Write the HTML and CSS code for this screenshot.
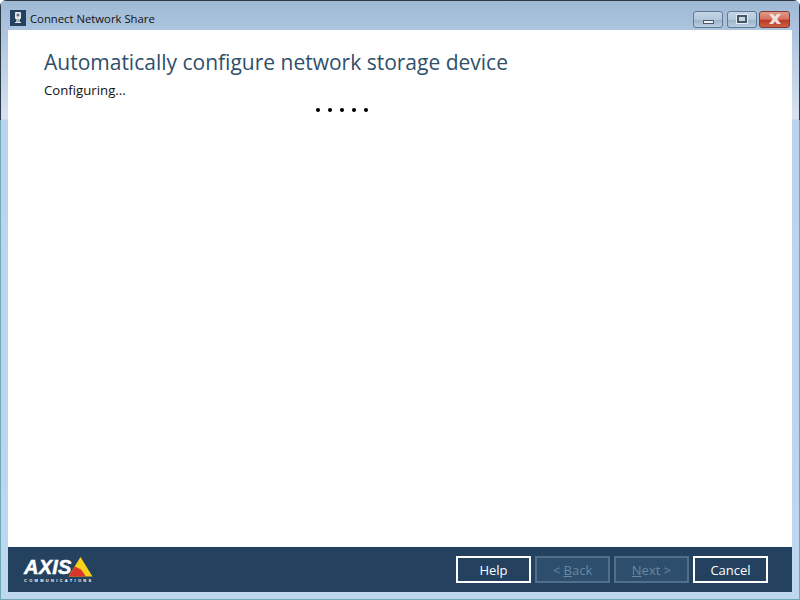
FILE: index.html
```html
<!DOCTYPE html>
<html lang="en">
<head>
    <meta charset="UTF-8">
    <title>Connect Network Share</title>
    <link rel="stylesheet" href="styles.css">
</head>
<body>
    <div class="window">
        <div class="titlebar">
            <div class="app-icon">
                <svg width="16" height="16" viewBox="0 0 16 16">
                    <rect width="16" height="16" fill="#24425f"/>
                    <rect x="5" y="2" width="6" height="7" rx="1" fill="#e4e8ea"/>
                    <circle cx="8" cy="5" r="1.500" fill="#5c7286"/>
                    <rect x="6" y="9" width="4" height="3" fill="#a9b4bd"/>
                    <rect x="5" y="12" width="6" height="1" fill="#e4e8ea"/>
                </svg>
            </div>
            <span class="window-title">Connect Network Share</span>
            <div class="window-controls">
                <div class="ctl"><span class="ctl-min"></span></div>
                <div class="ctl"><span class="ctl-max"></span></div>
                <div class="ctl ctl-close">
                    <svg width="14" height="10" viewBox="0 0 14 10">
                        <path d="M1 0h4l2 2.500 2-2.500h4l-3.800 5 3.800 5h-4l-2-2.500-2 2.500h-4l3.800-5z" fill="#f0dfdb"/>
                    </svg>
                </div>
            </div>
        </div>

        <div class="content">
            <h1>Automatically configure network storage device</h1>
            <p class="status">Configuring...</p>
            <div class="dots">
                <span></span><span></span><span></span><span></span><span></span>
            </div>
        </div>

        <div class="footer">
            <div class="logo">
                <div class="logo-top">
                    <span class="logo-axis">AXIS</span>
                    <svg width="25" height="20" viewBox="0 0 25 20">
                        <path d="M12.500 0L24.500 19.500H0.500z" fill="#f6d21a"/>
                        <path d="M0.500 19.500L7 9.500l6 3 5 7z" fill="#d8352c"/>
                    </svg>
                </div>
                <div class="logo-sub">COMMUNICATIONS</div>
            </div>
            <div class="buttons">
                <button class="btn">Help</button>
                <button class="btn" disabled>&lt; <u>B</u>ack</button>
                <button class="btn" disabled><u>N</u>ext &gt;</button>
                <button class="btn">Cancel</button>
            </div>
        </div>
    </div>
</body>
</html>
```

FILE: styles.css
```css
html, body {
    margin: 0;
    height: 100%;
    overflow: hidden;
}
body {
    font-family: "Open Sans", "Noto Sans", sans-serif;
    color: #111;
}
.window {
    box-sizing: border-box;
    width: 800px;
    height: 600px;
    display: flex;
    flex-direction: column;
    padding: 0 8px 8px;
    border-radius: 6px 6px 0 0;
    background:
        linear-gradient(#2c3a46, #2c3a46) top left / 100% 1px no-repeat,
        linear-gradient(#2c3a46 0, #2c3a46 120px, #6fa9b8 120px) top left / 1px 100% no-repeat,
        linear-gradient(#2c3a46 0, #2c3a46 120px, #6fa9b8 120px) top right / 1px 100% no-repeat,
        linear-gradient(#6fa9b8, #6fa9b8) bottom left / 100% 1px no-repeat,
        linear-gradient(#9fb9d5 0, #acc4de 30px, #d6e2f0 119px, #bcd3ee 120px, #bfd6f0 100%);
}
.titlebar {
    height: 30px;
    display: flex;
    align-items: center;
    flex-shrink: 0;
}
.app-icon {
    width: 16px;
    height: 16px;
    margin: 6px 4px 0 2px;
}
.app-icon svg {
    display: block;
}
.window-title {
    font-size: 11.300px;
    margin-top: 7px;
    color: #111;
}
.window-controls {
    margin-left: auto;
    margin-right: 2px;
    margin-top: 8px;
    display: flex;
}
.ctl {
    box-sizing: border-box;
    width: 30px;
    height: 17px;
    margin-left: 4px;
    border: 1px solid #5f7a93;
    border-radius: 3px;
    background: linear-gradient(#c4d5e6 0, #b3c8dc 50%, #9db5cc 55%, #b9cde0 100%);
    display: flex;
    align-items: center;
    justify-content: center;
}
.ctl-min {
    box-sizing: border-box;
    width: 11px;
    height: 4px;
    margin-top: 5px;
    background: #eef3f7;
    border: 1px solid #47586a;
}
.ctl-max {
    width: 6px;
    height: 4px;
    border: 2px solid #47586a;
    background: #c8d7e5;
    outline: 1px solid #e6edf3;
}
.ctl-close {
    width: 31px;
    margin-left: 2px;
    border-color: #7c3b33;
    background: linear-gradient(#e29b8a 0, #d5705c 48%, #bc3a25 55%, #cb5f48 100%);
}
.ctl-close svg {
    display: block;
}
.content {
    flex: 1;
    background: #fff;
    padding: 18px 36px 0;
    min-height: 0;
}
h1 {
    margin: 0;
    font-size: 21px;
    line-height: 28px;
    font-weight: 400;
    color: #2f4f6b;
}
.status {
    margin: 5px 0 0;
    font-size: 13.200px;
    line-height: 18px;
}
.dots {
    display: flex;
    gap: 8px;
    margin: 9px 0 0 272px;
}
.dots span {
    width: 4px;
    height: 4px;
    border-radius: 50%;
    background: #000;
}
.footer {
    height: 45px;
    flex-shrink: 0;
    background: #24425f;
    display: flex;
    align-items: center;
    justify-content: space-between;
    padding: 0 24px 0 16px;
}
.logo {
    color: #fff;
    width: 70px;
    margin-top: 1px;
}
.logo-top {
    display: flex;
    align-items: flex-end;
    height: 20px;
}
.logo-axis {
    font-family: "Liberation Sans", sans-serif;
    font-weight: 700;
    font-style: italic;
    font-size: 20px;
    line-height: 19px;
    width: 44px;
    letter-spacing: 0.2px;
    -webkit-text-stroke: 0.5px #fff;
}
.logo-sub {
    font-family: "Liberation Sans", sans-serif;
    font-size: 4px;
    font-weight: 700;
    letter-spacing: 2.300px;
    line-height: 5px;
    margin-top: 1px;
    white-space: nowrap;
}
.buttons {
    display: flex;
    gap: 4px;
}
.btn {
    box-sizing: border-box;
    width: 75px;
    height: 27px;
    padding: 0;
    border: 2px solid #fff;
    background: #24425f;
    color: #fff;
    font-family: inherit;
    font-size: 13px;
}
.btn:disabled {
    border-color: #506f8b;
    background: #2d4e6d;
    color: #6a87a1;
}
```
